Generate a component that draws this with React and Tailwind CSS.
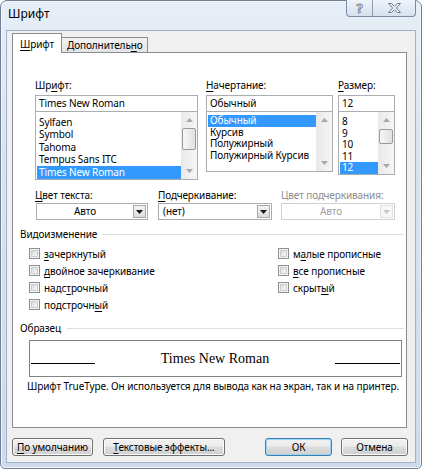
import React from "react";

// Underlined access-key letter
function Mn({ children }) {
  return <span className="underline decoration-1 underline-offset-[1.5px]">{children}</span>;
}

function Tri({ dir, color }) {
  return (
    <svg width="7" height="4" viewBox="0 0 7 4" className="block">
      {dir === "up" ? <path d="M0 4L3.5 0L7 4Z" fill={color} /> : <path d="M0 0H7L3.5 4Z" fill={color} />}
    </svg>
  );
}

function ScrollBar({ thumbClass }) {
  return (
    <div className="w-[16px] flex flex-col bg-[linear-gradient(to_right,#e9e9e9,#f6f6f6)]">
      <div className="h-[16px] flex items-center justify-center">
        <Tri dir="up" color="#a8a8a8" />
      </div>
      <div className="flex-1 flex flex-col px-[1px]">
        {thumbClass ? (
          <div className={`rounded-[2px] border border-[#9a9a9a] bg-[linear-gradient(to_right,#f7f7f7,#e1e1e1)] ${thumbClass}`} />
        ) : null}
      </div>
      <div className="h-[16px] flex items-center justify-center">
        <Tri dir="down" color="#a8a8a8" />
      </div>
    </div>
  );
}

function ListBox({ items, selected, rowClass, padClass, heightClass, thumbClass }) {
  return (
    <div className={`flex border border-t-0 border-[#abadb3] bg-white ${heightClass}`}>
      <div className={`flex-1 flex flex-col overflow-hidden pl-[1px] ${padClass}`}>
        {items.map((it) => (
          <div
            key={it}
            className={`${rowClass} shrink-0 flex items-center pl-[2px] leading-[11px] whitespace-nowrap ${
              it === selected ? "bg-[#3399ff] text-white" : "text-black"
            }`}
          >
            {it}
          </div>
        ))}
      </div>
      <ScrollBar thumbClass={thumbClass} />
    </div>
  );
}

function Label({ children, gray }) {
  return (
    <div className={`h-[14px] leading-[14px] whitespace-nowrap ${gray ? "text-[#8d8d8d]" : "text-black"}`}>
      {children}
    </div>
  );
}

function TextBox({ children }) {
  return (
    <div className="h-[17px] border border-[#abadb3] bg-white flex items-center pl-[3px] leading-[13px] whitespace-nowrap">
      {children}
    </div>
  );
}

function Combo({ text, center, disabled }) {
  return (
    <div
      className={`h-[17px] border bg-white flex items-stretch ${
        disabled ? "border-[#cfd1d5]" : "border-[#abadb3]"
      }`}
    >
      <div
        className={`flex-1 flex items-center leading-[13px] whitespace-nowrap ${center ? "justify-center" : "pl-[4px]"} ${
          disabled ? "text-[#a3a3a3]" : "text-black"
        }`}
      >
        {text}
      </div>
      <div
        className={`w-[13px] my-[1px] mr-[1px] flex items-center justify-center border ${
          disabled
            ? "border-[#e0e0e0] bg-[#f7f7f7]"
            : "border-[#a9a9a9] bg-[linear-gradient(#f3f3f3,#dcdcdc)]"
        }`}
      >
        <Tri dir="down" color={disabled ? "#c6c6c6" : "#1a1a1a"} />
      </div>
    </div>
  );
}

function Check({ children }) {
  return (
    <div className="h-[17px] flex items-center leading-[14px] whitespace-nowrap">
      <div className="w-[11px] h-[11px] border border-[#8e8f8f] bg-[#f4f4f4] p-[1px]">
        <div className="w-full h-full border border-[#cdcdcd] bg-[linear-gradient(135deg,#d9d9d9,#f9f9f9)]" />
      </div>
      <span className="ml-[4px]">{children}</span>
    </div>
  );
}

function GroupTitle({ children, lineClass }) {
  return (
    <div className="flex items-center ml-[7px] mr-[2px] h-[14px]">
      <span className="leading-[14px] whitespace-nowrap">{children}</span>
      <div className={`flex-1 h-px bg-[#dadfe4] ${lineClass}`} />
    </div>
  );
}

function Btn({ children, widthClass, primary }) {
  return (
    <div
      className={`${widthClass} h-[18px] rounded-[3px] border flex items-center justify-center leading-[13px] whitespace-nowrap bg-[linear-gradient(#f2f2f2_0%,#ebebeb_45%,#dddddd_50%,#cfcfcf_100%)] ${
        primary
          ? "border-[#3c7fb1] shadow-[inset_0_0_0_1px_#9ed4f3]"
          : "border-[#707070] shadow-[inset_0_0_0_1px_#fbfbfb]"
      }`}
    >
      {children}
    </div>
  );
}

export default function App() {
  return (
    <div className="w-[424px] h-[472px] bg-white font-['Noto_Sans',sans-serif] text-[10px] tracking-[-0.1px] text-black">
      {/* window frame */}
      <div className="w-[422px] h-[469px] rounded-t-[7px] rounded-b-[5px] border border-[#6f8096] bg-[linear-gradient(180deg,#e7eef7_0%,#d8e3f0_35%,#cddbeb_100%)] flex flex-col px-[5px] pb-[5px] shadow-[inset_0_0_0_1px_#f2f6fb]">
        {/* title bar */}
        <div className="h-[29px] flex items-start justify-between">
          <span className="ml-[2px] mt-[5px] text-[12px] leading-[16px] tracking-normal text-black">Шрифт</span>
          <div className="flex shrink-0 h-[17px] -mt-[1px] rounded-b-[4px] border border-t-0 border-[#7b8ba0] bg-[linear-gradient(#eef3f9,#d6e1ee)] overflow-hidden">
            <div className="w-[26px] shrink-0 flex items-center justify-center border-r border-[#8e9db0]">
              <span className="text-[13px] leading-[13px] font-bold text-[#f4f7fb] [-webkit-text-stroke:0.8px_#6f7c8c]">?</span>
            </div>
            <div className="w-[42px] shrink-0 flex items-center justify-center">
              <svg width="13" height="10" viewBox="0 0 13 10">
                <path
                  d="M0.5 0.5H3.5L6.5 3.3L9.5 0.5H12.5L8.3 5L12.5 9.5H9.5L6.5 6.7L3.5 9.5H0.5L4.7 5Z"
                  fill="#eef2f7"
                  stroke="#6f7c8c"
                  strokeWidth="1"
                  strokeLinejoin="round"
                />
              </svg>
            </div>
          </div>
        </div>

        {/* client area */}
        <div className="flex-1 bg-[#f0f0f0] border border-[#a2b2c6] flex flex-col">
          {/* tabs */}
          <div className="flex items-end ml-[5px] mt-[2px] h-[20px] relative z-10">
            <div className="w-[50px] h-[20px] bg-white border border-b-0 border-[#898c95] flex items-start pl-[7px] pt-[3px] leading-[14px]">
              <span><Mn>Ш</Mn>рифт</span>
            </div>
            <div className="w-[86px] h-[15px] border border-l-0 border-b-0 border-[#898c95] bg-[linear-gradient(#f3f3f3,#e4e4e4)] flex items-center pl-[5px] leading-[13px] mb-[1px]">
              <span>Дополнитель<Mn>н</Mn>о</span>
            </div>
          </div>

          {/* tab page */}
          <div className="ml-[5px] -mt-px w-[395px] h-[376px] border border-[#898c95] bg-white flex flex-col">
            {/* font / style / size */}
            <div className="flex mt-[25px] ml-[22px]">
              <div className="w-[163px] flex flex-col">
                <Label>Шр<Mn>и</Mn>фт:</Label>
                <div className="mt-[3px]">
                  <TextBox>Times New Roman</TextBox>
                </div>
                <ListBox
                  items={["Sylfaen", "Symbol", "Tahoma", "Tempus Sans ITC", "Times New Roman"]}
                  selected="Times New Roman"
                  rowClass="h-[12.5px]"
                  padClass="pt-[4px]"
                  heightClass="h-[68px]"
                  thumbClass="h-[22px]"
                />
              </div>
              <div className="w-[127px] ml-[8px] flex flex-col">
                <Label><Mn>Н</Mn>ачертание:</Label>
                <div className="mt-[3px]">
                  <TextBox>Обычный</TextBox>
                </div>
                <ListBox
                  items={["Обычный", "Курсив", "Полужирный", "Полужирный Курсив"]}
                  selected="Обычный"
                  rowClass="h-[11.5px]"
                  padClass="pt-[3px]"
                  heightClass="h-[60px]"
                  thumbClass={null}
                />
              </div>
              <div className="w-[57px] ml-[5px] flex flex-col">
                <Label><Mn>Р</Mn>азмер:</Label>
                <div className="mt-[3px]">
                  <TextBox>12</TextBox>
                </div>
                <ListBox
                  items={["8", "9", "10", "11", "12"]}
                  selected="12"
                  rowClass="h-[11.5px]"
                  padClass="pt-[4px]"
                  heightClass="h-[63px]"
                  thumbClass="mt-[1px] h-[15px]"
                />
              </div>
            </div>

            {/* colours / underline */}
            <div className="flex mt-[8px] ml-[22px]">
              <div className="w-[113px] flex flex-col">
                <Label><Mn>Ц</Mn>вет текста:</Label>
                <div className="mt-[1px] ml-[1px]">
                  <Combo text="Авто" center />
                </div>
              </div>
              <div className="w-[114px] ml-[10px] flex flex-col">
                <Label><Mn>П</Mn>одчеркивание:</Label>
                <div className="mt-[1px]">
                  <Combo text="(нет)" />
                </div>
              </div>
              <div className="w-[114px] ml-[9px] flex flex-col">
                <Label gray>Цвет подчеркивания:</Label>
                <div className="mt-[1px]">
                  <Combo text="Авто" center disabled />
                </div>
              </div>
            </div>

            {/* effects */}
            <div className="mt-[7px]">
              <GroupTitle lineClass="ml-[5px]">Видоизменение</GroupTitle>
            </div>
            <div className="flex mt-[4px] ml-[16px]">
              <div className="w-[249px] flex flex-col">
                <Check><Mn>з</Mn>ачеркнутый</Check>
                <Check><Mn>д</Mn>войное зачеркивание</Check>
                <Check>надс<Mn>т</Mn>рочный</Check>
                <Check>подстрочн<Mn>ы</Mn>й</Check>
              </div>
              <div className="flex flex-col">
                <Check>м<Mn>а</Mn>лые прописные</Check>
                <Check><Mn>в</Mn>се прописные</Check>
                <Check>скрыт<Mn>ы</Mn>й</Check>
              </div>
            </div>

            {/* preview */}
            <div className="mt-[8px]">
              <GroupTitle lineClass="ml-[6px]">Образец</GroupTitle>
            </div>
            <div className="mt-[5px] ml-[16px] w-[373px] h-[37px] border border-[#828282] flex items-center">
              <div className="w-[64px] h-px bg-black ml-[1px] mt-[9px]" />
              <div className="flex-1 flex justify-center font-['Liberation_Serif',serif] text-[14px] leading-[16px] tracking-normal">
                Times New Roman
              </div>
              <div className="w-[65px] h-px bg-black mr-[1px] mt-[9px]" />
            </div>
            <div className="mt-[2px] ml-[14px] h-[14px] leading-[14px] whitespace-nowrap">
              Шрифт TrueType. Он используется для вывода как на экран, так и на принтер.
            </div>
          </div>

          {/* buttons */}
          <div className="flex justify-between mt-[10px] ml-[5px] mr-[7px]">
            <div className="flex gap-[10px]">
              <Btn widthClass="w-[81px]"><span><Mn>П</Mn>о умолчанию</span></Btn>
              <Btn widthClass="w-[122px]"><span><Mn>Т</Mn>екстовые эффекты...</span></Btn>
            </div>
            <div className="flex gap-[9px]">
              <Btn widthClass="w-[67px]" primary>ОК</Btn>
              <Btn widthClass="w-[67px]">Отмена</Btn>
            </div>
          </div>
        </div>
      </div>
    </div>
  );
}
